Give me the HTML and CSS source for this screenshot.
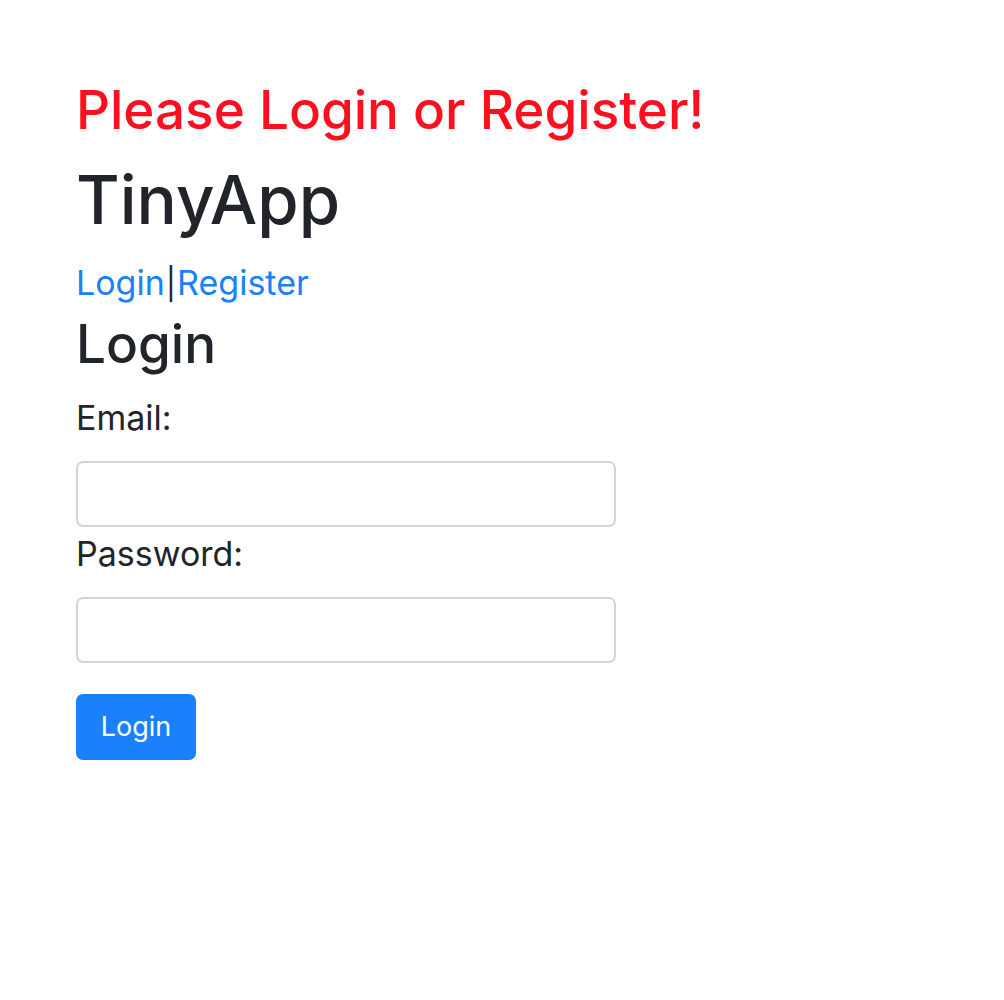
FILE: index.html
```html
<!DOCTYPE html>
<html lang="en">
<head>
<meta charset="utf-8">
<title>TinyApp</title>
<link rel="stylesheet" href="styles.css">
</head>
<body>
<main class="page">
  <h2 class="alert-title">Please Login or Register!</h2>
  <h1 class="brand">TinyApp</h1>
  <nav class="auth-links"><a href="#" class="link">Login</a><span class="sep">|</span><a href="#" class="link">Register</a></nav>
  <h2 class="section-title">Login</h2>
  <form class="login-form">
    <label class="field-label" for="email">Email:</label>
    <input class="field-input" type="email" id="email" name="email">
    <label class="field-label" for="password">Password:</label>
    <input class="field-input" type="password" id="password" name="password">
    <button class="btn-primary" type="submit">Login</button>
  </form>
</main>
</body>
</html>
```
FILE: styles.css
```css
html, body {
  margin: 0;
  padding: 0;
  background: #ffffff;
}
body {
  font-family: Inter, "Liberation Sans", Arial, sans-serif;
  color: #212529;
  font-size: 28px;
  line-height: 1.5;
}
.page {
  padding: 77px 0 0 76px;
}
.alert-title {
  margin: 0 0 14px 0;
  font-size: 53px;
  line-height: 67px;
  font-weight: 500;
  color: #fe0f1f;
}
.brand {
  margin: 0 0 14px 0;
  font-size: 67px;
  line-height: 84px;
  font-weight: 500;
}
.auth-links {
  font-size: 34px;
  line-height: 53px;
  height: 53px;
}
.sep {
  font-size: 31px;
  padding: 0 1px;
}
.link {
  color: #1a80fb;
  text-decoration: none;
}
.section-title {
  margin: 2px 0 14px 0;
  font-size: 53px;
  line-height: 67px;
  font-weight: 500;
}
.login-form {
  display: flex;
  flex-direction: column;
  align-items: flex-start;
}
.field-label {
  font-size: 34px;
  line-height: 52px;
  margin-bottom: 17px;
}
.field-input {
  box-sizing: border-box;
  width: 540px;
  height: 66px;
  border: 2px solid #d1d5db;
  border-radius: 7px;
  margin: 0 0 1px 0;
  padding: 0 21px;
  font-size: 28px;
  font-family: inherit;
  background: #fff;
}
.btn-primary {
  margin-top: 30px;
  box-sizing: border-box;
  width: 120px;
  height: 66px;
  border: none;
  border-radius: 7px;
  background: #1a80fb;
  color: #ffffff;
  font-family: inherit;
  font-size: 27px;
  line-height: 1.5;
  padding: 0;
}
```
